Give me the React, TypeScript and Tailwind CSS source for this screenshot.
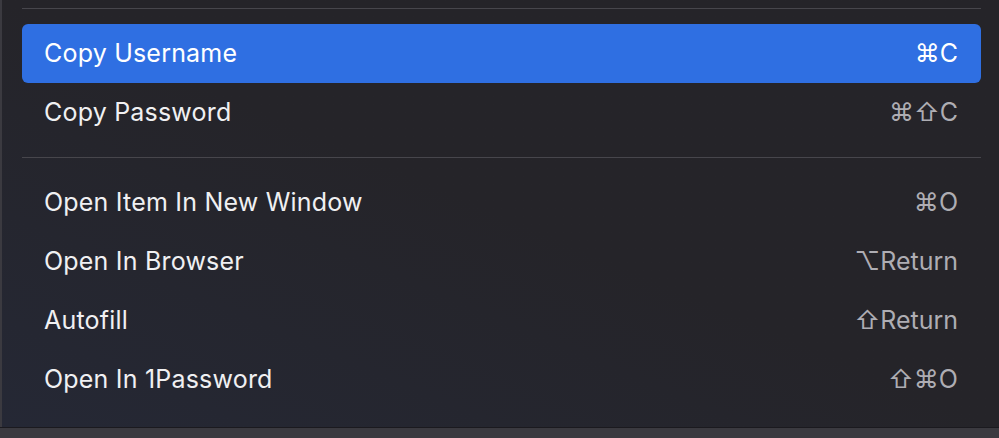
import React from "react";

type Item = { label: string; keys: string; active?: boolean };

const group1: Item[] = [
  { label: "Copy Username", keys: "⌘C", active: true },
  { label: "Copy Password", keys: "⌘⇧C" },
];
const group2: Item[] = [
  { label: "Open Item In New Window", keys: "⌘O" },
  { label: "Open In Browser", keys: "⌥Return" },
  { label: "Autofill", keys: "⇧Return" },
  { label: "Open In 1Password", keys: "⇧⌘O" },
];

function Row({ item }: { item: Item }) {
  return (
    <div
      className={
        "flex h-[59px] items-center justify-between rounded-[6px] pl-[22px] pr-[23px] " +
        (item.active ? "bg-[#2f6fe2] text-white" : "text-[#f0f0f2]")
      }
    >
      <span className="text-[25px] leading-none tracking-[0.2px]">{item.label}</span>
      <span
        className={
          "text-[25px] leading-none " + (item.active ? "text-white" : "text-[#aeadb3]")
        }
      >
        {item.keys}
      </span>
    </div>
  );
}

export default function App() {
  return (
    <div
      className="flex h-[438px] w-[999px] flex-col overflow-hidden"
      style={{ fontFamily: "Inter, 'DejaVu Sans', sans-serif" }}
    >
      <div className="flex h-[427px]">
        <div className="w-[2px] bg-[#3b3a40]" />
        <div className="flex flex-1 flex-col bg-gradient-to-tr from-[#252835] via-[#252429] to-[#252429] pl-[20px] pr-[18px] pt-[8px]">
          <div className="h-px bg-[#47464c]" />
          <div className="mt-[15px] flex flex-col">
            {group1.map((it) => (
              <Row key={it.label} item={it} />
            ))}
          </div>
          <div className="mt-[15px] h-px bg-[#47464c]" />
          <div className="mt-[15px] flex flex-col">
            {group2.map((it) => (
              <Row key={it.label} item={it} />
            ))}
          </div>
        </div>
      </div>
      <div className="h-px bg-[#1b1a1f]" />
      <div className="flex-1 bg-[#3b3a40]" />
    </div>
  );
}
